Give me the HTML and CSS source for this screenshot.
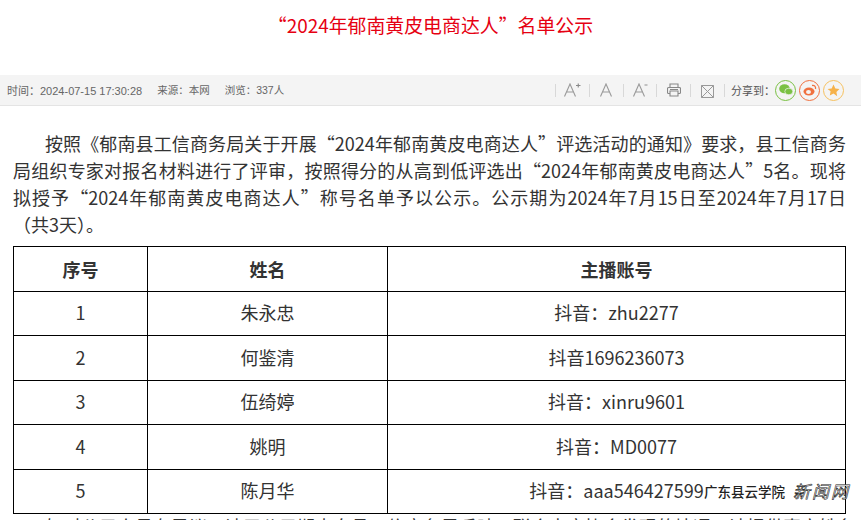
FILE: index.html
```html
<!DOCTYPE html>
<html lang="zh-CN">
<head>
<meta charset="utf-8">
<title>“2024年郁南黄皮电商达人”名单公示</title>
<link rel="stylesheet" href="styles.css">
</head>
<body>
<h1 class="title">“2024年郁南黄皮电商达人”名单公示</h1>
<div class="meta">
  <div class="info"><span>时间：2024-07-15 17:30:28</span><span class="narrow">来源：本网</span><span class="narrow">浏览：337人</span></div>
  <div class="tools">
    <span class="tool"><svg width="17" height="14" viewBox="0 0 17 14"><path d="M.5 13.500 6 1l5.500 12.500M2.500 9h7" fill="none" stroke="#999" stroke-width="1.100"/><path d="M12 2.500h4.500M14.250.5v4" stroke="#888" stroke-width="1.100"/></svg></span>
    <span class="tool"><svg width="12" height="14" viewBox="0 0 12 14"><path d="M.5 13.500 6 1l5.500 12.500M2.500 9h7" fill="none" stroke="#999" stroke-width="1.100"/></svg></span>
    <span class="tool"><svg width="15" height="14" viewBox="0 0 15 14"><path d="M.5 13.500 6 1l5.500 12.500M2.500 9h7" fill="none" stroke="#999" stroke-width="1.100"/><path d="M11.500 2h3" stroke="#999" stroke-width="1.100"/></svg></span>
    <span class="tool"><svg width="14" height="14" viewBox="0 0 14 14"><path d="M3 4.500V1h8v3.500M3 10.500H1.500a1 1 0 0 1-1-1v-4a1 1 0 0 1 1-1h11a1 1 0 0 1 1 1v4a1 1 0 0 1-1 1H11M3 8h8v5H3z" fill="none" stroke="#888" stroke-width="1.100"/><path d="M3 6.500h8" stroke="#888"/></svg></span>
    <span class="tool"><svg class="close" width="13" height="13" viewBox="0 0 13 13"><path d="M.5.500h12v12H.5zM.5.500l12 12M12.500.500l-12 12" fill="none" stroke="#999"/></svg></span>
    <span class="tool last">分享到：</span>
    <span class="share wechat"><svg width="14" height="12" viewBox="0 0 14 12"><ellipse cx="5.500" cy="4.800" rx="5.300" ry="4.500" fill="#7ac143"/><ellipse cx="9.800" cy="7.500" rx="4" ry="3.300" fill="#7ac143" stroke="#f4f4f4" stroke-width=".7"/></svg></span>
    <span class="share weibo"><svg width="14" height="12" viewBox="0 0 14 12"><ellipse cx="6" cy="7.500" rx="5.500" ry="4" fill="#f0703f"/><ellipse cx="5.500" cy="8" rx="2.500" ry="2" fill="#f4f4f4"/><path d="M9 1.500c2.500-.5 4 1 3.500 3.500" fill="none" stroke="#f0703f" stroke-width="1.300"/></svg></span>
    <span class="share star"><svg width="13" height="13" viewBox="0 0 12 12"><path d="M6 .5l1.700 3.600 3.800.5-2.800 2.700.7 3.900L6 8.800l-3.400 1.900.7-3.900L.5 4.600l3.800-.5z" fill="#f6b24a"/></svg></span>
  </div>
</div>
<div class="article">
  <p class="para">按照《郁南县工信商务局关于开展“2024年郁南黄皮电商达人”评选活动的通知》要求，县工信商务局组织专家对报名材料进行了评审，按照得分的从高到低评选出“2024年郁南黄皮电商达人”5名。现将拟授予“2024年郁南黄皮电商达人”称号名单予以公示。公示期为2024年7月15日至2024年7月17日<span class="tail">（共3天）。</span></p>
  <table class="list">
    <colgroup><col class="c1"><col class="c2"><col class="c3"></colgroup>
    <thead><tr><th>序号</th><th>姓名</th><th>主播账号</th></tr></thead>
    <tbody>
      <tr><td>1</td><td>朱永忠</td><td>抖音：zhu2277</td></tr>
      <tr><td>2</td><td>何鉴清</td><td>抖音1696236073</td></tr>
      <tr><td>3</td><td>伍绮婷</td><td>抖音：xinru9601</td></tr>
      <tr><td>4</td><td>姚明</td><td>抖音：MD0077</td></tr>
      <tr><td>5</td><td>陈月华</td><td>抖音：aaa546427599</td></tr>
    </tbody>
  </table>
  <p class="para after">如对公示人员有异议，请于公示期内向县工信商务局反映，联合电商协会发现的情况，请提供真实姓名</p>
</div>
<div class="mark"><span class="m1">广东县云学院</span><span class="m2">新闻网</span></div>
</body>
</html>
```
FILE: styles.css
```css
html, body { margin: 0; padding: 0; background: #fff; overflow: hidden; height: 520px; }
body { position: relative; font-family: "Noto Sans CJK SC", "Noto Sans", sans-serif; color: #333; }
.title { margin: 0; height: 75px; padding-top: 12px; box-sizing: border-box; font-size: 18.900px; font-weight: 400; line-height: 26px; color: #e60012; text-align: center; }
.meta { height: 31px; background: #f4f4f4; border-bottom: 1px solid #e4e4e4; box-sizing: border-box; display: flex; justify-content: space-between; align-items: center; padding: 0 17px 0 7px; font-family: "Liberation Sans", "Noto Sans CJK SC", sans-serif; font-size: 11px; color: #666; }
.info { display: flex; gap: 15px; }
.narrow { font-size: 10.500px; }
.tools { display: flex; align-items: center; }
.tool { display: flex; align-items: center; justify-content: center; width: 33.800px; height: 13px; border-left: 1px solid #d8d8d8; box-sizing: border-box; }
.tool.last { width: auto; padding-left: 6px; white-space: nowrap; font-size: 11px; color: #555; }
.close { margin-top: 2px; }
.share { width: 21px; height: 21px; border-radius: 50%; box-sizing: border-box; border: 1px solid; display: flex; align-items: center; justify-content: center; margin-right: 3px; }
.wechat { border-color: #7ac143; }
.weibo { border-color: #f0703f; }
.star { border-color: #f6c15f; margin-right: 0; }
.article { padding: 24px 15px 0 13px; font-size: 18px; line-height: 27px; }
.para { margin: 0; text-indent: 32px; text-align: justify; }
.tail { display: inline-block; text-indent: 0; white-space: nowrap; }
.list { width: 833px; border-collapse: collapse; margin-top: 8px; table-layout: fixed; text-align: center; }
.c1 { width: 134px; } .c2 { width: 240px; }
.list th, .list td { border: 1px solid #000; height: 44.500px; padding: 0 0 1px; box-sizing: border-box; }
.list th { font-weight: 700; font-size: 18px; padding: 1px 0 0; }
.after { margin-top: -1px; white-space: nowrap; }
.mark { position: absolute; left: 704px; top: 481px; display: flex; align-items: center; gap: 8px; }
.m1 { font-size: 13.500px; line-height: 20px; font-weight: 500; color: #222; background: #fff; text-shadow: 0 0 1px #fff; }
.m2 { font-size: 17px; line-height: 20px; letter-spacing: 2px; color: #fff; -webkit-text-stroke: .6px #222; font-style: italic; }
```
